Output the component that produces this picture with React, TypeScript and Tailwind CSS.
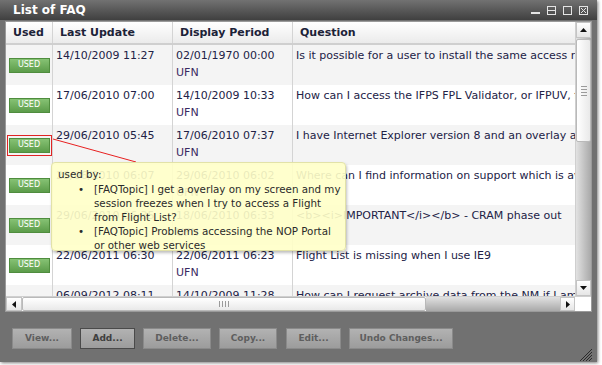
const rows = [
  { upd: "14/10/2009 11:27", from: "02/01/1970 00:00", q: "Is it possible for a user to install the same access rights on another computer?" },
  { upd: "17/06/2010 07:00", from: "14/10/2009 10:33", q: "How can I access the IFPS FPL Validator, or IFPUV, from the NOP Portal?" },
  { upd: "29/06/2010 05:45", from: "17/06/2010 07:37", q: "I have Internet Explorer version 8 and an overlay appears on my screen" },
  { upd: "29/06/2010 06:07", from: "29/06/2010 06:02", q: "Where can I find information on support which is available?" },
  { upd: "29/06/2010 06:35", from: "18/06/2010 06:33", q: "<b><i>IMPORTANT</i></b> - CRAM phase out" },
  { upd: "22/06/2011 06:30", from: "22/06/2011 06:23", q: "Flight List is missing when I use IE9" },
  { upd: "06/09/2012 08:11", from: "14/10/2009 11:28", q: "How can I request archive data from the NM if I am not a user?" },
];

const buttons = [
  { label: "View...", w: "w-[60px]" },
  { label: "Add...", w: "w-[55px]", active: true },
  { label: "Delete...", w: "w-[68px]" },
  { label: "Copy...", w: "w-[58px]" },
  { label: "Edit...", w: "w-[55px] ml-[1px]" },
  { label: "Undo Changes...", w: "w-[104px]" },
];

function UsedBtn() {
  return (
    <div className="w-[41px] h-[15px] bg-gradient-to-b from-[#86c274] to-[#5c9c4a] border border-[#4f8d3e] flex items-center justify-center text-white text-[8px] leading-none">
      USED
    </div>
  );
}

function TitleIcons() {
  return (
    <div className="flex items-center gap-[7px] pr-[9px]">
      <svg width="9" height="9" viewBox="0 0 9 9">
        <rect x="0" y="6" width="9" height="2" fill="#e4e4e4" />
      </svg>
      <svg width="9" height="9" viewBox="0 0 9 9" fill="none" stroke="#e4e4e4">
        <rect x="0.5" y="0.5" width="8" height="8" />
        <line x1="0" y1="4.5" x2="9" y2="4.5" />
      </svg>
      <svg width="9" height="9" viewBox="0 0 9 9" fill="none" stroke="#e4e4e4">
        <rect x="0.5" y="0.5" width="8" height="8" />
      </svg>
      <svg width="9" height="9" viewBox="0 0 9 9" fill="none" stroke="#e4e4e4">
        <rect x="0.5" y="0.5" width="8" height="8" />
        <line x1="2" y1="2" x2="7" y2="7" />
        <line x1="7" y1="2" x2="2" y2="7" />
      </svg>
    </div>
  );
}

export default function App() {
  return (
    <div className="w-[602px] h-[365px] bg-white relative font-['DejaVu_Sans',sans-serif]">
      <div className="w-[597px] h-[362px] bg-[#717171] flex flex-col shadow-[1px_1px_3px_rgba(0,0,0,0.5)]">
        <div className="h-[21px] bg-gradient-to-b from-[#727272] to-[#404040] flex items-center justify-between">
          <span className="pl-[13px] text-white font-bold text-[12px]">List of FAQ</span>
          <TitleIcons />
        </div>
        <div className="flex-1 flex flex-col pt-[1px] px-[5px]">
          <div className="h-[291px] bg-white border border-[#9a9a9a] flex flex-col">
            <div className="flex flex-1 min-h-0">
              <div className="flex-1 flex flex-col overflow-hidden text-[11px] text-[#222246]">
                <div className="h-[23px] shrink-0 flex bg-gradient-to-b from-white to-[#ebebeb] border-b-2 border-[#cfcfcf] font-bold text-[#1c2238] leading-[21px]">
                  <div className="w-[47px] pl-[7px] border-r border-[#d4d4d4]">Used</div>
                  <div className="w-[120px] pl-[7px] border-r border-[#d4d4d4]">Last Update</div>
                  <div className="w-[120px] pl-[7px] border-r border-[#d4d4d4]">Display Period</div>
                  <div className="flex-1 pl-[7px]">Question</div>
                </div>
                {rows.map((r, i) => (
                  <div key={i} className={`h-[40px] shrink-0 flex leading-[17px] ${i % 2 === 0 ? "bg-[#f4f4f4]" : "bg-white"}`}>
                    <div className="w-[47px] border-r border-[#d4d4d4] flex items-center justify-center">
                      {i === 2 ? (
                        <div className="border border-[#e02424] px-[1px] py-[2px]">
                          <UsedBtn />
                        </div>
                      ) : (
                        <UsedBtn />
                      )}
                    </div>
                    <div className="w-[120px] pl-[3px] pt-[2px] border-r border-[#d4d4d4] whitespace-nowrap">{r.upd}</div>
                    <div className="w-[120px] pl-[3px] pt-[2px] border-r border-[#d4d4d4] whitespace-nowrap">
                      <div>{r.from}</div>
                      <div className="text-[#3a2a62]">UFN</div>
                    </div>
                    <div className="flex-1 pl-[3px] pt-[2px] whitespace-nowrap overflow-hidden">{r.q}</div>
                  </div>
                ))}
              </div>
              <div className="w-[16px] flex flex-col bg-gradient-to-r from-[#e2e2e2] to-[#a9a9a9] border-l border-[#cfcfcf]">
                <div className="h-[16px] bg-gradient-to-b from-white to-[#e6e6e6] border border-[#c4c4c4] flex items-center justify-center">
                  <svg width="7" height="4" viewBox="0 0 7 4"><path d="M0 4 L3.5 0 L7 4 Z" fill="#111" /></svg>
                </div>
                <div className="h-[103px] mt-[1px] bg-gradient-to-r from-white to-[#e9e9e9] border border-[#b9b9b9] rounded-[2px] flex items-center justify-center">
                  <div className="flex flex-col gap-[2px]">
                    <div className="w-[6px] h-px bg-[#9a9a9a]" />
                    <div className="w-[6px] h-px bg-[#9a9a9a]" />
                    <div className="w-[6px] h-px bg-[#9a9a9a]" />
                    <div className="w-[6px] h-px bg-[#9a9a9a]" />
                  </div>
                </div>
                <div className="flex-1" />
                <div className="h-[16px] bg-gradient-to-b from-white to-[#e6e6e6] border border-[#c4c4c4] flex items-center justify-center">
                  <svg width="7" height="4" viewBox="0 0 7 4"><path d="M0 0 L3.5 4 L7 0 Z" fill="#111" /></svg>
                </div>
              </div>
            </div>
            <div className="h-[15px] shrink-0 flex border-t border-[#cfcfcf]">
              <div className="w-[16px] bg-gradient-to-b from-white to-[#e6e6e6] border border-[#c4c4c4] flex items-center justify-center">
                <svg width="4" height="7" viewBox="0 0 4 7"><path d="M4 0 L0 3.5 L4 7 Z" fill="#111" /></svg>
              </div>
              <div className="w-[404px] bg-gradient-to-b from-white to-[#e9e9e9] border border-[#b9b9b9] rounded-[2px] flex items-center justify-center">
                <div className="flex gap-[2px]">
                  <div className="w-px h-[6px] bg-[#9a9a9a]" />
                  <div className="w-px h-[6px] bg-[#9a9a9a]" />
                  <div className="w-px h-[6px] bg-[#9a9a9a]" />
                  <div className="w-px h-[6px] bg-[#9a9a9a]" />
                </div>
              </div>
              <div className="flex-1 bg-gradient-to-b from-[#e2e2e2] to-[#a9a9a9]" />
              <div className="w-[15px] bg-gradient-to-b from-white to-[#e6e6e6] border border-[#c4c4c4] flex items-center justify-center">
                <svg width="4" height="7" viewBox="0 0 4 7"><path d="M0 0 L4 3.5 L0 7 Z" fill="#111" /></svg>
              </div>
              <div className="w-[16px] bg-white" />
            </div>
          </div>
          <div className="flex gap-[8px] pl-[7px] mt-[16px]">
            {buttons.map((b) => (
              <div
                key={b.label}
                className={`${b.w} h-[21px] flex items-center justify-center text-[9px] font-bold bg-gradient-to-b from-[#b2b2b2] to-[#9c9c9c] border ${b.active ? "border-[#4a4a4a] text-[#3e3e3e]" : "border-[#8a8a8a] text-[#5e5e5e]"}`}
              >
                {b.label}
              </div>
            ))}
          </div>
          <div className="flex-1 flex items-end justify-end pb-[1px]">
            <svg width="12" height="12" viewBox="0 0 12 12" stroke="#2a2a2a" strokeWidth="1">
              <line x1="12" y1="0" x2="0" y2="12" />
              <line x1="12" y1="3" x2="3" y2="12" />
              <line x1="12" y1="6" x2="6" y2="12" />
              <line x1="12" y1="9" x2="9" y2="12" />
            </svg>
          </div>
        </div>
      </div>

      <svg className="absolute left-0 top-0 pointer-events-none" width="602" height="365">
        <line x1="53" y1="139" x2="136" y2="162" stroke="#e82020" strokeWidth="1" />
      </svg>

      <div className="absolute left-[51px] top-[162px] w-[295px] h-[89px] bg-[#ffffc8]/90 border border-[#e2e2a8] rounded-[4px] shadow-[1px_2px_3px_rgba(0,0,0,0.25)] text-[10.3px] leading-[14px] text-[#2a2a2a] pt-[4px] pl-[6px]">
        <div>used by:</div>
        <div className="flex pl-[20px] mt-[1px]">
          <span className="w-[16px] shrink-0">•</span>
          <span className="whitespace-nowrap">
            [FAQTopic] I get a overlay on my screen and my<br />
            session freezes when I try to access a Flight<br />
            from Flight List?
          </span>
        </div>
        <div className="flex pl-[20px]">
          <span className="w-[16px] shrink-0">•</span>
          <span className="whitespace-nowrap">
            [FAQTopic] Problems accessing the NOP Portal<br />
            or other web services
          </span>
        </div>
      </div>
    </div>
  );
}
